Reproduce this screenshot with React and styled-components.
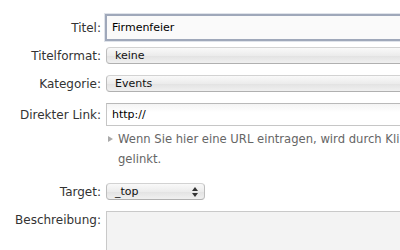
import React from "react";
import styled, { createGlobalStyle } from "styled-components";

const Global = createGlobalStyle`
  html, body { margin: 0; padding: 0; background: #fff; }
  body { font-family: "DejaVu Sans", "Lucida Grande", Verdana, sans-serif; overflow: hidden; width: 400px; height: 250px; }
`;

const Form = styled.div`
  display: flex;
  flex-direction: column;
  padding-top: 14px;
  width: 460px;
`;

const Row = styled.div`
  display: grid;
  grid-template-columns: 101px 1fr;
  column-gap: 5px;
  align-items: ${p => (p.$top ? "start" : "center")};
  margin-bottom: ${p => p.$mb || 0}px;
`;

const Label = styled.label`
  text-align: right;
  font-size: 12px;
  color: #333;
  white-space: nowrap;
  padding-top: ${p => p.$pt || 0}px;
`;

const FocusInput = styled.div`
  height: 23px;
  border: 2px solid #9fa8ba;
  box-shadow: 0 0 0 1px #dfe3ea;
  background: #fafafa;
  display: flex;
  align-items: center;
  padding-left: 5px;
  font-size: 11px;
  color: #000;
  margin-left: -1px;
`;

const TextInput = styled.div`
  height: 21px;
  border: 1px solid #c6c6c6;
  border-top-color: #b9b9b9;
  background: linear-gradient(#f4f4f4, #fff 40%);
  display: flex;
  align-items: center;
  padding-left: 5px;
  font-size: 11px;
  color: #000;
`;

const Select = styled.div`
  box-sizing: border-box;
  height: 17px;
  width: ${p => (p.$w ? `${p.$w}px` : "auto")};
  border: 1px solid #bdbdbd;
  border-top-color: #d2d2d2;
  border-bottom-color: #b0b0b0;
  border-radius: 4px;
  background: linear-gradient(#f9f9f9, #ececec 50%, #e2e2e2 51%, #f0f0f0);
  display: flex;
  align-items: center;
  justify-content: space-between;
  padding: 0 6px 0 8px;
  font-size: 11px;
  color: #111;
`;

const Arrows = styled.svg`
  width: 6px;
  height: 10px;
`;

const Hint = styled.div`
  grid-column: 2;
  display: flex;
  align-items: flex-start;
  font-size: 11.6px;
  line-height: 20px;
  color: #666;
  padding-top: 3px;
`;

const HintText = styled.div`
  display: flex;
  flex-direction: column;
  white-space: nowrap;
`;

const Tri = styled.span`
  width: 0;
  height: 0;
  border-top: 3.5px solid transparent;
  border-bottom: 3.5px solid transparent;
  border-left: 5px solid #aaa;
  margin: 7px 5px 0 2px;
  flex: none;
`;

const TextArea = styled.div`
  height: 60px;
  border: 1px solid #c9c9c9;
  background: #f3f3f3;
`;

export default function App() {
  return (
    <>
      <Global />
      <Form>
        <Row $mb={6}>
          <Label>Titel:</Label>
          <FocusInput>Firmenfeier</FocusInput>
        </Row>
        <Row $mb={11}>
          <Label>Titelformat:</Label>
          <Select>keine</Select>
        </Row>
        <Row $mb={11}>
          <Label>Kategorie:</Label>
          <Select>Events</Select>
        </Row>
        <Row>
          <Label>Direkter Link:</Label>
          <TextInput>http://</TextInput>
        </Row>
        <Row $mb={14}>
          <Hint>
            <Tri />
            <HintText>
              <span>Wenn Sie hier eine URL eintragen, wird durch Kli</span>
              <span>gelinkt.</span>
            </HintText>
          </Hint>
        </Row>
        <Row $mb={11}>
          <Label>Target:</Label>
          <Select $w={99}>
            _top
            <Arrows viewBox="0 0 6 10">
              <path d="M3 0 L6 4 H0 Z M0 6 H6 L3 10 Z" fill="#333" />
            </Arrows>
          </Select>
        </Row>
        <Row $top>
          <Label $pt={2}>Beschreibung:</Label>
          <TextArea />
        </Row>
      </Form>
    </>
  );
}
